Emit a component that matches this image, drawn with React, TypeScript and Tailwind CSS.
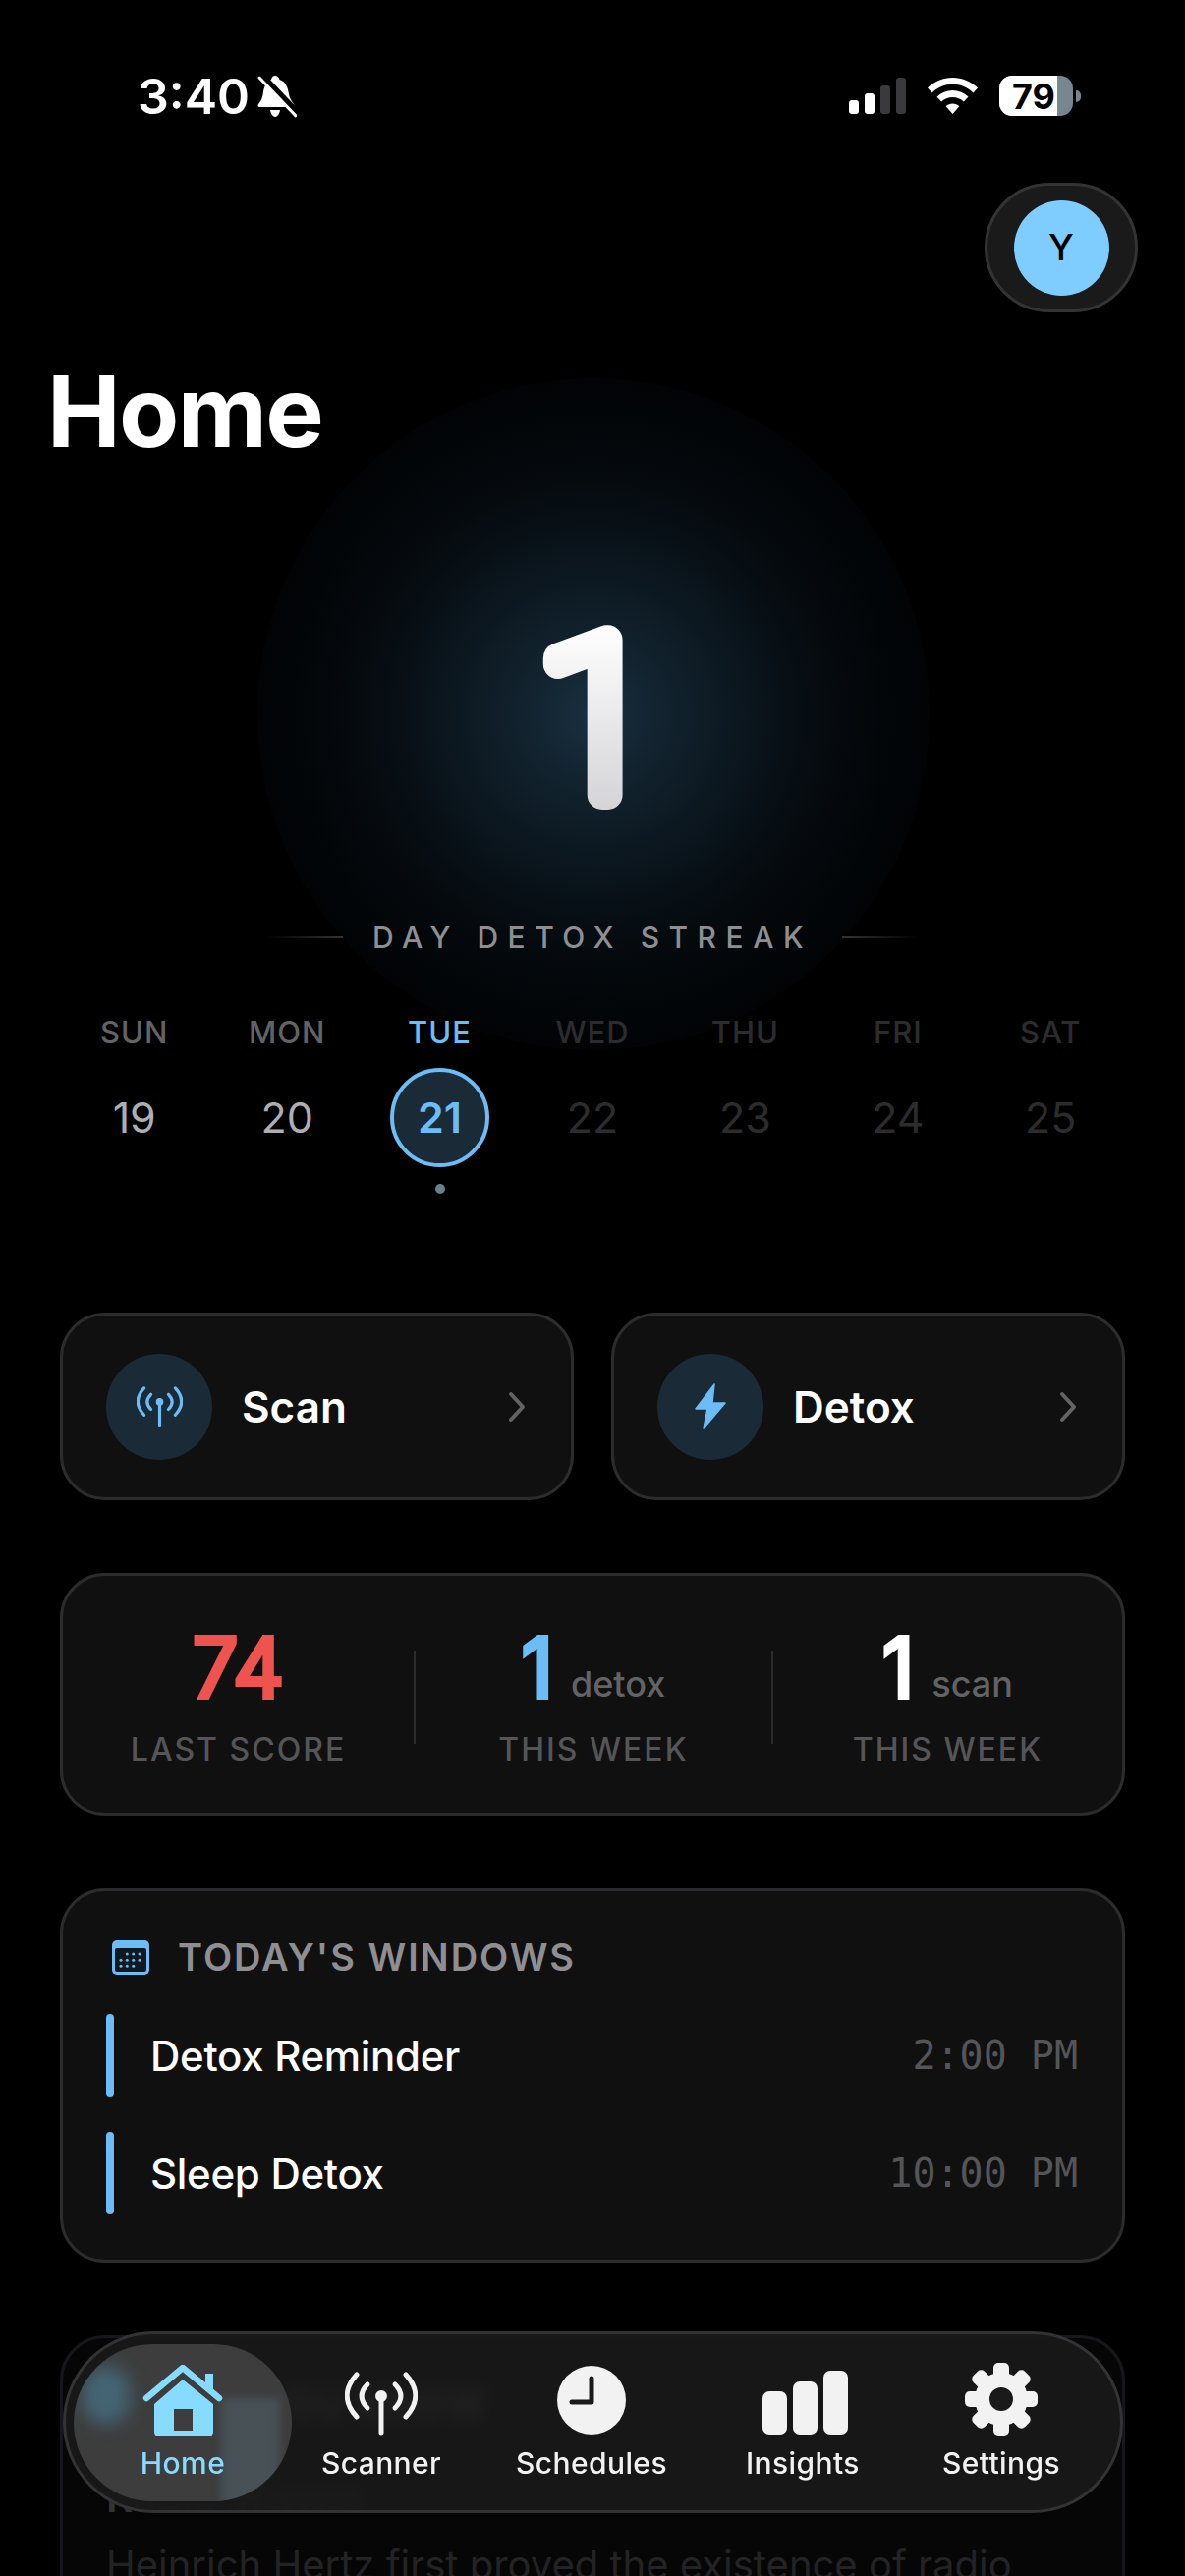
const days = [
  { name: "SUN", num: "19", label: "text-[#636366]", value: "text-[#aeaeb2]" },
  { name: "MON", num: "20", label: "text-[#636366]", value: "text-[#aeaeb2]" },
  { name: "TUE", num: "21", label: "text-[#6cbcf5]", value: "text-[#6cbcf5]", today: true },
  { name: "WED", num: "22", label: "text-[#2c2c2e]", value: "text-[#2c2c2e]" },
  { name: "THU", num: "23", label: "text-[#2c2c2e]", value: "text-[#2c2c2e]" },
  { name: "FRI", num: "24", label: "text-[#2c2c2e]", value: "text-[#2c2c2e]" },
  { name: "SAT", num: "25", label: "text-[#2c2c2e]", value: "text-[#2c2c2e]" },
];

function BellSlash() {
  return (
    <svg width="40" height="43" viewBox="0 0 40 43">
      <path
        d="M18 0c2 0 4 1.500 4.500 4C29 6 31 12 32 19c.6 4 3 7 5 10 1 1.500.5 3-1 3H2c-1.500 0-2-1.500-1-3 2.500-3 4-6 4.600-10C6.500 12 8.500 6 14 4 14.500 1.500 16 0 18 0z"
        fill="#fff"
      />
      <path d="M13 35h10c-.5 4-3 7-5 7s-4.500-3-5-7z" fill="#fff" />
      <path d="M4 -1 42 39" stroke="#000" strokeWidth="6" />
      <path d="M2 2 39 41" stroke="#fff" strokeWidth="3" strokeLinecap="round" />
    </svg>
  );
}

function StatusBar() {
  return (
    <div className="flex h-[186px] items-start justify-between pl-[140px] pr-[106px] pt-[71px]">
      <div className="flex items-center gap-[8px]">
        <span className="text-[50px] leading-[54px] font-semibold text-white">3:40</span>
        <BellSlash />
      </div>
      <div className="flex items-center gap-[22px] pt-[6px]">
        <div className="flex items-end gap-[6px]">
          <div className="h-[14px] w-[10px] rounded-[3px] bg-white" />
          <div className="h-[21px] w-[10px] rounded-[3px] bg-white" />
          <div className="h-[29px] w-[10px] rounded-[3px] bg-[#3a3a3c]" />
          <div className="h-[37px] w-[10px] rounded-[3px] bg-[#3a3a3c]" />
        </div>
        <svg width="51" height="38" viewBox="0 0 51 38">
          <path d="M25.500 0C35 0 44 3.800 51 10.500l-4.500 5C40.800 9.800 33.500 6.800 25.500 6.800S10.200 9.800 4.500 15.500L0 10.500C7 3.800 16 0 25.500 0z" fill="#fff" />
          <path d="M25.500 13c6 0 11.500 2.300 16 6.500l-4.700 5c-3-2.800-7-4.500-11.300-4.500s-8.300 1.700-11.300 4.500l-4.700-5C14 15.300 19.500 13 25.500 13z" fill="#fff" />
          <path d="M25.500 26.500c2.600 0 5 1 6.800 2.700L25.500 37l-6.800-7.800c1.800-1.700 4.200-2.700 6.800-2.700z" fill="#fff" />
        </svg>
        <div className="flex items-center gap-[3px]">
          <div className="flex h-[41px] w-[75px] overflow-hidden rounded-[13px] bg-[#78868f]">
            <div className="flex w-[59px] items-center justify-end bg-white pr-[2px] text-[36px] leading-none font-bold text-black">
              79
            </div>
          </div>
          <div className="h-[12px] w-[5px] rounded-r-full bg-[#78868f]" />
        </div>
      </div>
    </div>
  );
}

function AntennaIcon({ color, width, stroke }: { color: string; width: number; stroke: number }) {
  return (
    <svg width={width} height={(width * 65) / 74} viewBox="0 0 74 65" fill="none" stroke={color} strokeWidth={stroke} strokeLinecap="round">
      <path d="M12 3C-1 17-1 32 12 46" />
      <path d="M23 13C15 21 15 29 23 37" />
      <path d="M62 3c13 14 13 29 0 43" />
      <path d="M51 13c8 8 8 16 0 24" />
      <path d="M37 25v37" />
      <circle cx="37" cy="25" r="3.500" fill={color} />
    </svg>
  );
}

function ActionCard({ title, icon }: { title: string; icon: React.ReactNode }) {
  return (
    <div className="flex h-[191px] items-center rounded-[46px] border-[3px] border-[#2c2c2e] bg-[#101010] pr-[46px] pl-[44px]">
      <div className="flex h-[108px] w-[108px] items-center justify-center rounded-full bg-[#1a2a36]">{icon}</div>
      <span className="ml-[30px] flex-1 text-[44px] leading-none font-semibold text-white">{title}</span>
      <svg width="18" height="32" viewBox="0 0 18 32" fill="none" stroke="#636366" strokeWidth="4" strokeLinecap="round" strokeLinejoin="round">
        <path d="M3 3l12 13L3 29" />
      </svg>
    </div>
  );
}

function Stat({ value, color, unit, label }: { value: string; color: string; unit?: string; label: string }) {
  return (
    <div className="flex flex-col items-center">
      <div className="flex items-baseline gap-[18px]">
        <span className={`text-[82px] leading-[84px] font-light [-webkit-text-stroke:6px_currentColor] [stroke-linejoin:round] ${color}`}>{value}</span>
        {unit && <span className="text-[36px] leading-none font-medium text-[#636366]">{unit}</span>}
      </div>
      <span className="mt-[22px] text-[32px] leading-[38px] font-medium tracking-[2px] text-[#555558]">{label}</span>
    </div>
  );
}

function WindowRow({ title, time }: { title: string; time: string }) {
  return (
    <div className="flex h-[84px] items-center">
      <div className="h-full w-[8px] rounded-full bg-[#6cbcf5]" />
      <span className="ml-[37px] flex-1 text-[42px] font-medium tracking-[-0.3px] text-white">{title}</span>
      <span className="pr-[1px] text-[40px] text-[#555558] [font-family:'DejaVu_Sans_Mono',monospace]">{time}</span>
    </div>
  );
}

function NavItem({ label, width, icon }: { label: string; width: string; icon: React.ReactNode }) {
  return (
    <div className={`flex h-[160px] flex-col items-center ${width}`}>
      <div className="flex h-[95px] items-end pb-[2px]">{icon}</div>
      <span className="mt-[8px] text-[30px] leading-[36px] font-medium tracking-[0.4px] text-[#f2f2f2]">{label}</span>
    </div>
  );
}

function BottomNav() {
  return (
    <div className="absolute top-[2373px] left-[64px] flex h-[185px] w-[1079px] items-center rounded-full border-[3px] border-[#333335] bg-[#1a1a1a]/90 px-[8px] backdrop-blur-[7px]">
      <div className="relative flex h-[160px] w-[222px] flex-col items-center overflow-hidden rounded-[80px] bg-[#3d3d3d] pt-[21px]">
        {/* refracted bits of the card underneath */}
        <div className="absolute top-[22px] left-[8px] h-[60px] w-[50px] rounded-full bg-[#4a7f99] opacity-60 blur-[9px]" />
        <div className="absolute top-[55px] left-[150px] h-[110px] w-[60px] bg-[#4f5f68] opacity-60 blur-[4px]" />
        <svg width="84" height="74" viewBox="0 0 84 74" className="relative text-[#87dbff]">
          <path d="M5 34 42 3l37 31" fill="none" stroke="currentColor" strokeWidth="6.500" strokeLinecap="round" strokeLinejoin="round" />
          <path d="M65 9h8v22l-8-7z" fill="currentColor" />
          <path d="M42 15 13 40v28c0 3 2 5 5 5h50c3 0 5-2 5-5V40zM33 45h19v22H33z" fill="currentColor" fillRule="evenodd" />
        </svg>
        <span className="relative mt-[8px] text-[30px] leading-[36px] font-medium tracking-[0.4px] text-[#87dbff]">Home</span>
      </div>
      <NavItem label="Scanner" width="w-[182px]" icon={<AntennaIcon color="#f2f2f2" width={74} stroke={5} />} />
      <NavItem
        label="Schedules"
        width="w-[246px]"
        icon={
          <svg width="72" height="72" viewBox="0 0 72 72">
            <circle cx="36" cy="36" r="35" fill="#f2f2f2" />
            <path d="M36 14v24H16" fill="none" stroke="#1a1a1a" strokeWidth="5" strokeLinecap="round" strokeLinejoin="round" />
          </svg>
        }
      />
      <NavItem
        label="Insights"
        width="w-[184px]"
        icon={
          <svg width="88" height="66" viewBox="0 0 88 66" fill="#f2f2f2" className="ml-[5px]">
            <rect x="0" y="21" width="25" height="44" rx="7" />
            <rect x="31" y="11" width="25" height="54" rx="7" />
            <rect x="62" y="0" width="25" height="65" rx="7" />
          </svg>
        }
      />
      <NavItem
        label="Settings"
        width="w-[220px]"
        icon={
          <svg width="74" height="74" viewBox="0 0 74 74">
            <g fill="#f2f2f2">
              {[0, 45, 90, 135].map((r) => (
                <rect key={r} x="29" y="0" width="16" height="74" rx="5" transform={`rotate(${r} 37 37)`} />
              ))}
              <circle cx="37" cy="37" r="27" />
            </g>
            <circle cx="37" cy="37" r="12" fill="#1a1a1a" />
          </svg>
        }
      />
    </div>
  );
}

function CalendarIcon({ light, dark }: { light: string; dark: string }) {
  const dots = [
    [15.3, 14],
    [21.7, 14],
    [28, 14],
    [9, 20.3],
    [15.3, 20.3],
    [21.7, 20.3],
    [28, 20.3],
    [9, 26.3],
    [15.3, 26.3],
    [21.7, 26.3],
  ];
  return (
    <svg width="38" height="35" viewBox="0 0 38 35">
      <rect width="38" height="35" rx="5" fill={light} />
      <rect x="3" y="8" width="32" height="24" rx="2" fill={dark} />
      {dots.map(([x, y]) => (
        <circle key={`${x}-${y}`} cx={x} cy={y} r="1.500" fill={light} />
      ))}
    </svg>
  );
}

export default function App() {
  return (
    <div className="relative h-[2622px] w-[1206px] overflow-hidden bg-black [font-family:Inter,sans-serif]">
      {/* glow behind the streak */}
      <div className="absolute top-[385px] left-[262px] h-[684px] w-[684px] rounded-full bg-[radial-gradient(circle_closest-side,#1a3040_0%,#12232f_20%,#0b161e_45%,#050a0e_70%,#010305_100%)]" />

      <div className="relative">
        <StatusBar />
        <div className="flex justify-end pr-[48px]">
          <div className="flex h-[132px] w-[156px] items-center justify-center rounded-full border-[3px] border-[#333335] bg-[#1a1a1a]">
            <div className="flex h-[97px] w-[97px] items-center justify-center rounded-full bg-[#7fcdff] text-[37px] font-medium text-black">
              Y
            </div>
          </div>
        </div>
        <h1 className="mt-[46px] pl-[48px] text-[100px] leading-[110px] font-bold tracking-[-1.700px] text-white">Home</h1>

        <svg width="300" height="280" className="mx-auto mt-[121px] block" viewBox="0 0 300 280">
          <defs>
            <linearGradient id="one" gradientUnits="userSpaceOnUse" x1="0" y1="40" x2="0" y2="229">
              <stop offset="0" stopColor="#ffffff" />
              <stop offset="1" stopColor="#d4d4d8" />
            </linearGradient>
          </defs>
          <text
            x="155"
            y="214"
            textAnchor="middle"
            fontSize="220"
            fontWeight="100"
            fill="url(#one)"
            stroke="url(#one)"
            strokeWidth="30"
            strokeLinejoin="round"
            strokeLinecap="round"
            className="[font-family:Roboto,sans-serif]"
          >
            1
          </text>
        </svg>

        <div className="mt-[61px] flex items-center justify-center gap-[30px]">
          <div className="h-[2px] w-[78px] bg-gradient-to-l from-[#333335] to-transparent" />
          <span className="text-[30px] leading-[36px] font-medium tracking-[9.500px] text-[#8e8e93]">DAY DETOX STREAK</span>
          <div className="h-[2px] w-[78px] bg-gradient-to-r from-[#333335] to-transparent" />
        </div>

        <div className="mt-[60px] grid grid-cols-7 px-[59px]">
          {days.map((d) => (
            <div key={d.name} className="flex flex-col items-center">
              <span className={`text-[31px] leading-[38px] font-medium tracking-[1px] ${d.label}`}>{d.name}</span>
              <div
                className={`mt-[17px] flex h-[101px] w-[101px] items-center justify-center rounded-full ${
                  d.today ? "border-[4px] border-[#6cbcf5] bg-[#1a2a36]" : ""
                }`}
              >
                <span className={`text-[43px] ${d.today ? "font-semibold" : "font-normal"} ${d.value}`}>{d.num}</span>
              </div>
              {d.today && <div className="mt-[17px] h-[10px] w-[10px] rounded-full bg-[#6d7f8c]" />}
            </div>
          ))}
        </div>

        <div className="mt-[121px] flex flex-col gap-[74px] px-[61px]">
          <div className="grid grid-cols-2 gap-[38px]">
            <ActionCard title="Scan" icon={<AntennaIcon color="#6cbcf5" width={47} stroke={5} />} />
            <ActionCard
              title="Detox"
              icon={
                <svg width="32" height="47" viewBox="0 0 32 47" fill="#6cbcf5" stroke="#6cbcf5" strokeWidth="1.500" strokeLinejoin="round">
                  <path d="M20 1 1 26h12L9 46l22-26H18z" />
                </svg>
              }
            />
          </div>

          <div className="grid h-[247px] grid-cols-[357px_2px_362px_2px_1fr] items-center rounded-[46px] border-[3px] border-[#2c2c2e] bg-[#101010] pt-[6px]">
            <Stat value="74" color="text-[#ef5350]" label="LAST SCORE" />
            <div className="h-[95px] bg-[#2c2c2e]" />
            <Stat value="1" color="text-[#6cbcf5]" unit="detox" label="THIS WEEK" />
            <div className="h-[95px] bg-[#2c2c2e]" />
            <Stat value="1" color="text-white" unit="scan" label="THIS WEEK" />
          </div>

          <div className="flex h-[381px] flex-col rounded-[46px] border-[3px] border-[#2c2c2e] bg-[#101010] px-[44px] pt-[47px]">
            <div className="flex items-center gap-[29px] pl-[6px]">
              <CalendarIcon light="#6cbcf5" dark="#101820" />
              <span className="text-[38px] leading-[40px] font-semibold tracking-[2px] text-[#8e8e93]">TODAY'S WINDOWS</span>
            </div>
            <div className="mt-[38px] flex flex-col gap-[36px]">
              <WindowRow title="Detox Reminder" time="2:00 PM" />
              <WindowRow title="Sleep Detox" time="10:00 PM" />
            </div>
          </div>

          <div className="h-[300px] rounded-t-[46px] border-[3px] border-[#15171a] bg-[#060606] px-[44px] pt-[47px]">
            <div className="flex items-center gap-[29px] pl-[6px]">
              <CalendarIcon light="#4a7f99" dark="#101820" />
              <span className="text-[38px] leading-[40px] font-semibold tracking-[2px] text-[#8e8e93]">DID YOU KNOW</span>
            </div>
            <div className="mt-[50px] text-[42px] leading-[50px] font-semibold text-[#333335]">Radio Waves</div>
            <div className="mt-[20px] text-[40px] leading-[48px] text-[#232325]">Heinrich Hertz first proved the existence of radio</div>
          </div>
        </div>
      </div>

      <BottomNav />
    </div>
  );
}
